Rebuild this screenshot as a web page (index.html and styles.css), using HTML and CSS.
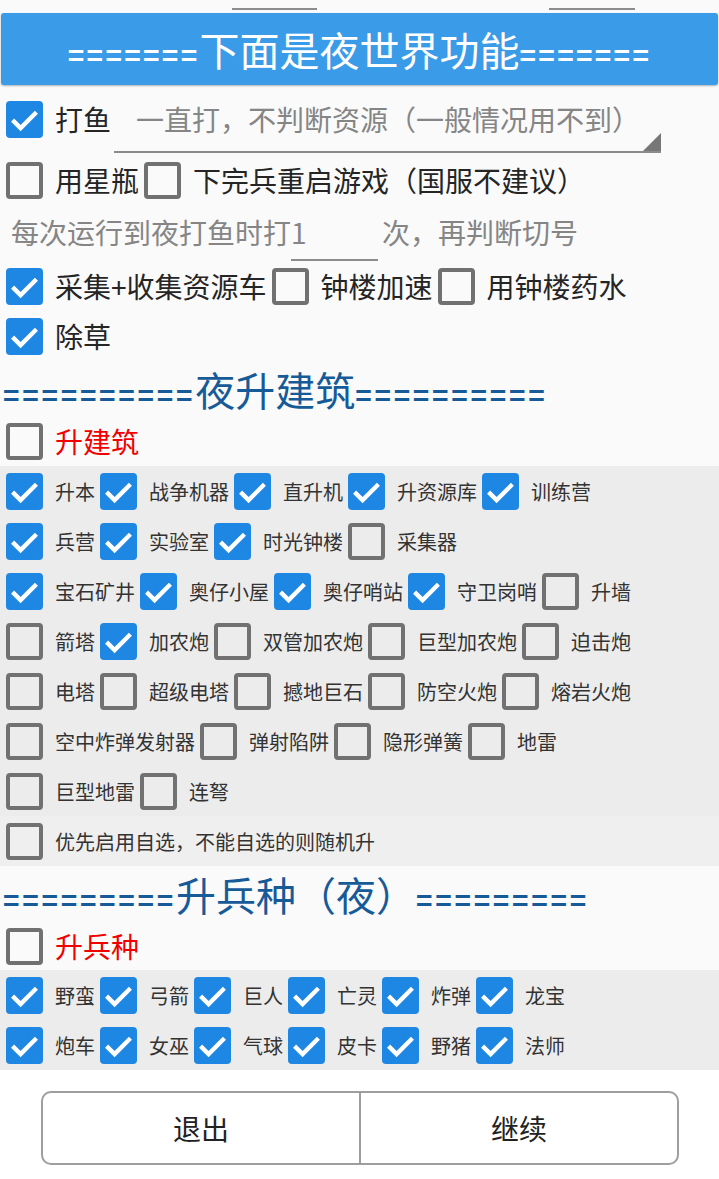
FILE: index.html
```html
<!DOCTYPE html>
<html lang="zh-CN">
<head>
    <meta charset="UTF-8">
    <meta name="viewport" content="width=device-width, initial-scale=1.0">
    <title>夜世界功能</title>
    <link rel="stylesheet" href="styles.css">
</head>
<body>
    <!-- bout de la ligne precedente (champs coupes en haut) -->
    <div class="strip">
        <span class="strip-line line-a"></span>
        <span class="strip-line line-b"></span>
    </div>

    <div class="title-bar"><span><span class="eq">=======</span>下面是夜世界功能<span class="eq">=======</span></span></div>

    <div class="row row-fish">
        <label class="item">
            <span class="cb on"><svg viewBox="0 0 18 18"><path d="M3.2 9.3l3.9 3.9 7.7-7.7"/></svg></span>
            <span class="txt">打鱼</span>
        </label>
        <div class="spinner">
            <span class="spinner-text">一直打，不判断资源（一般情况用不到）</span>
            <span class="spinner-arrow"></span>
        </div>
    </div>

    <div class="row">
        <label class="item"><span class="cb"></span><span class="txt">用星瓶</span></label>
        <label class="item"><span class="cb"></span><span class="txt">下完兵重启游戏（国服不建议）</span></label>
    </div>

    <div class="row row-count">
        <span class="hint">每次运行到夜打鱼时打</span>
        <span class="count-input">1</span>
        <span class="hint hint-after">次，再判断切号</span>
    </div>

    <div class="row">
        <label class="item">
            <span class="cb on"><svg viewBox="0 0 18 18"><path d="M3.2 9.3l3.9 3.9 7.7-7.7"/></svg></span>
            <span class="txt">采集+收集资源车</span>
        </label>
        <label class="item"><span class="cb"></span><span class="txt">钟楼加速</span></label>
        <label class="item"><span class="cb"></span><span class="txt">用钟楼药水</span></label>
    </div>

    <div class="row">
        <label class="item">
            <span class="cb on"><svg viewBox="0 0 18 18"><path d="M3.2 9.3l3.9 3.9 7.7-7.7"/></svg></span>
            <span class="txt">除草</span>
        </label>
    </div>

    <div class="section-title"><span><span class="eq">==========</span>夜升建筑<span class="eq">==========</span></span></div>

    <div class="row">
        <label class="item"><span class="cb"></span><span class="txt red">升建筑</span></label>
    </div>

    <div class="panel" id="build-panel"></div>

    <div class="section-title section-troops"><span><span class="eq">=========</span>升兵种（夜）<span class="eq">=========</span></span></div>

    <div class="row row-troops">
        <label class="item"><span class="cb"></span><span class="txt red">升兵种</span></label>
    </div>

    <div class="panel" id="troop-panel"></div>

    <div class="bottom">
        <div class="btn-group">
            <div class="btn">退出</div>
            <div class="btn">继续</div>
        </div>
    </div>

    <script>
        // [texte, coche]
        const buildRows = [
            [['升本', 1], ['战争机器', 1], ['直升机', 1], ['升资源库', 1], ['训练营', 1]],
            [['兵营', 1], ['实验室', 1], ['时光钟楼', 1], ['采集器', 0]],
            [['宝石矿井', 1], ['奥仔小屋', 1], ['奥仔哨站', 1], ['守卫岗哨', 1], ['升墙', 0]],
            [['箭塔', 0], ['加农炮', 1], ['双管加农炮', 0], ['巨型加农炮', 0], ['迫击炮', 0]],
            [['电塔', 0], ['超级电塔', 0], ['撼地巨石', 0], ['防空火炮', 0], ['熔岩火炮', 0]],
            [['空中炸弹发射器', 0], ['弹射陷阱', 0], ['隐形弹簧', 0], ['地雷', 0]],
            [['巨型地雷', 0], ['连弩', 0]],
            [['优先启用自选，不能自选的则随机升', 0]]
        ];
        const troopRows = [
            [['野蛮', 1], ['弓箭', 1], ['巨人', 1], ['亡灵', 1], ['炸弹', 1], ['龙宝', 1]],
            [['炮车', 1], ['女巫', 1], ['气球', 1], ['皮卡', 1], ['野猪', 1], ['法师', 1]]
        ];

        const check = '<svg viewBox="0 0 18 18"><path d="M3.2 9.3l3.9 3.9 7.7-7.7"/></svg>';

        function fillPanel(id, rows) {
            const panel = document.getElementById(id);
            rows.forEach((items, i) => {
                const row = document.createElement('div');
                row.className = 'panel-row';
                if (id === 'build-panel' && i === rows.length - 1) row.classList.add('panel-row-last');
                items.forEach(([label, on]) => {
                    row.insertAdjacentHTML('beforeend',
                        '<label class="item small"><span class="cb' + (on ? ' on">' + check : '">') +
                        '</span><span class="txt">' + label + '</span></label>');
                });
                panel.appendChild(row);
            });
        }

        fillPanel('build-panel', buildRows);
        fillPanel('troop-panel', troopRows);
    </script>
</body>
</html>
```

FILE: styles.css
```css
:root {
    --page-bg: #fafafa;
    --panel-bg: #ececec;
    --blue-bar: #3a9be8;
    --check-blue: #1e87e3;
    --box-gray: #717171;
    --title-blue: #175a98;
    --text: #252525;
    --hint: #858585;
}
body {
    margin: 0;
    background-color: var(--page-bg);
    color: var(--text);
    font-family: "Noto Sans CJK SC", "Noto Sans", sans-serif;
    overflow: hidden;
}
.strip {
    height: 13px;
    display: flex;
}
.strip-line {
    height: 2px;
    margin-top: 8px;
    background-color: #8c8c8c;
}
.line-a {
    margin-left: 232px;
    width: 85px;
}
.line-b {
    margin-left: 232px;
    width: 86px;
}
.title-bar {
    height: 72px;
    margin: 0 1px 10px 1px;
    background-color: var(--blue-bar);
    border-radius: 3px;
    box-shadow: 0 1px 2px rgba(0, 0, 0, 0.3);
    color: #fff;
    font-size: 40px;
    display: flex;
    align-items: center;
    justify-content: center;
    white-space: nowrap;
}
/* les "=" : traits courts et epais, bien espaces */
.eq {
    font-size: 28px;
    font-weight: 700;
    letter-spacing: 2.7px;
}
.title-bar .eq {
    letter-spacing: 2.3px;
}
.row {
    height: 50px;
    display: flex;
    align-items: center;
    padding-left: 1px;
    white-space: nowrap;
}
.item {
    display: flex;
    align-items: center;
}
.cb {
    width: 37px;
    height: 37px;
    box-sizing: border-box;
    margin: 0 12px 0 5px;
    border: 4px solid var(--box-gray);
    border-radius: 4px;
    flex-shrink: 0;
}
.cb.on {
    border: none;
    background-color: var(--check-blue);
}
.cb svg {
    display: block;
    width: 100%;
    height: 100%;
}
.cb svg path {
    fill: none;
    stroke: #fff;
    stroke-width: 2.1;
}
.txt {
    font-size: 28px;
    line-height: 37px;
}
.red {
    color: #f00000;
}
/* ligne "打鱼" avec le spinner */
.row-fish {
    height: 60px;
    align-items: flex-start;
}
.row-fish .item {
    margin-top: 6px;
}
.spinner {
    margin-left: 3px;
    width: 547px;
    height: 58px;
    box-sizing: border-box;
    border-bottom: 2px solid #8c8c8c;
    display: flex;
    padding-left: 22px;
}
.spinner-text {
    font-size: 28px;
    line-height: 37px;
    margin-top: 6px;
    color: var(--hint);
}
.spinner-arrow {
    margin-left: auto;
    align-self: flex-end;
    width: 0;
    height: 0;
    border-left: 18px solid transparent;
    border-bottom: 18px solid #777;
}
.row-count {
    height: 56px;
    padding-left: 11px;
    align-items: stretch;
}
.hint {
    font-size: 28px;
    color: var(--hint);
    display: flex;
    align-items: center;
    padding-bottom: 3px;
}
.count-input {
    width: 87px;
    box-sizing: border-box;
    border-bottom: 2px solid #8c8c8c;
    font-size: 28px;
    color: var(--hint);
    display: flex;
    align-items: center;
}
.hint-after {
    margin-left: 4px;
}
.section-title {
    height: 55px;
    padding-left: 3px;
    color: var(--title-blue);
    font-size: 40px;
    display: flex;
    align-items: center;
    white-space: nowrap;
}
.section-troops {
    height: 56px;
}
.row-troops {
    height: 48px;
}
.panel {
    background-color: var(--panel-bg);
}
.panel-row {
    height: 50px;
    display: flex;
    align-items: center;
    padding-left: 1px;
    white-space: nowrap;
}
.panel-row-last {
    background-color: #efefef;
}
.small .txt {
    font-size: 20px;
    color: #333;
}
.bottom {
    background-color: #fff;
    height: 109px;
    padding: 21px 0 0 41px;
    box-sizing: border-box;
}
.btn-group {
    width: 638px;
    height: 74px;
    box-sizing: border-box;
    border: 2px solid #9e9e9e;
    border-radius: 10px;
    display: flex;
}
.btn {
    flex: 1;
    display: flex;
    align-items: center;
    justify-content: center;
    font-size: 28px;
    color: #222;
}
.btn + .btn {
    border-left: 2px solid #9e9e9e;
}
```
